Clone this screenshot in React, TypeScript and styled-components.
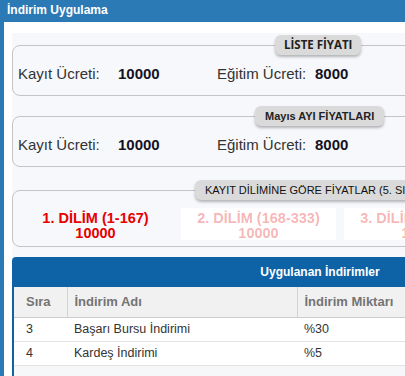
import React from "react";
import styled, { createGlobalStyle, css } from "styled-components";

const GlobalStyle = createGlobalStyle`
  html, body {
    margin: 0;
    padding: 0;
    overflow: hidden;
    background: #fff;
  }
  body {
    font-family: "Liberation Sans", Arial, sans-serif;
  }
  * {
    box-sizing: border-box;
  }
`;

const Frame = styled.div`
  width: 405px;
  height: 376px;
  border-left: 4px solid #2b7ab6;
  overflow: hidden;
  background: #fff;
`;

const TopBar = styled.div`
  height: 22px;
  background: #2b7ab6;
  color: #fff;
  font-size: 12px;
  font-weight: bold;
  line-height: 20px;
  padding-left: 3px;
  white-space: nowrap;
`;

const Body = styled.div`
  padding: 11px 0 0 8px;
`;

const Sheet = styled.div`
  width: 616px;
  background: #f6f8fb;
  padding: 2px 0 20px;
`;

const PriceBox = styled.fieldset<{ $gap: number; $bottom?: number }>`
  margin: ${(p) => p.$gap}px 0 0;
  padding: 0 0 ${(p) => p.$bottom ?? 12}px 5px;
  border: 1px solid #c4c4c4;
  border-radius: 8px;
  min-inline-size: 0;
`;

type LegendKind = "open" | "bold" | "plain";

const Legend = styled.legend<{ $offset: number; $kind: LegendKind }>`
  margin-left: ${(p) => p.$offset}px;
  height: 20px;
  line-height: 20px;
  padding: 0 10px;
  background: #dadada;
  border-radius: 6px;
  box-shadow: 0 2px 3px rgba(0, 0, 0, 0.28);
  color: #222;
  white-space: nowrap;
  ${(p) =>
    p.$kind === "open" &&
    css`
      font-family: "Open Sans", "Liberation Sans", sans-serif;
      font-weight: bold;
      font-size: 11.5px;
      padding: 0 9px;
    `}
  ${(p) =>
    p.$kind === "bold" &&
    css`
      font-weight: bold;
      font-size: 11px;
    `}
  ${(p) =>
    p.$kind === "plain" &&
    css`
      font-size: 11px;
      color: #111;
    `}
`;

const FeeRow = styled.div`
  display: grid;
  grid-template-columns: 100px 99px 98px auto;
  margin-top: 10px;
  line-height: 18px;
  font-size: 15px;
  white-space: nowrap;
`;

const FeeLabel = styled.span`
  color: #333;
`;

const FeeValue = styled.span`
  color: #15121f;
  font-weight: bold;
`;

const DilimRow = styled.div`
  display: flex;
  gap: 8px;
  margin-top: 8px;
`;

const DilimItem = styled.div<{ $active: boolean }>`
  flex: 0 0 155px;
  height: 32px;
  text-align: center;
  font-size: 14.5px;
  font-weight: bold;
  line-height: 15px;
  padding-top: 3px;
  white-space: nowrap;
  color: ${(p) => (p.$active ? "#e60000" : "rgba(230, 0, 0, 0.3)")};
  background: ${(p) => (p.$active ? "transparent" : "#fff")};
`;

const Panel = styled.div`
  margin-top: 10px;
  border: 2px solid #0e63a7;
  border-bottom: none;
  border-radius: 4px 4px 0 0;
  background: #f6f7f9;
  min-height: 130px;
`;

const PanelTitle = styled.div`
  height: 28px;
  background: #0e63a7;
  color: #fff;
  font-size: 12px;
  font-weight: bold;
  line-height: 26px;
  text-align: center;
`;

const Table = styled.table`
  width: 100%;
  border-collapse: collapse;
  table-layout: fixed;
`;

const Th = styled.th<{ $first?: boolean }>`
  height: 30px;
  background: #f1f1f1;
  color: #747474;
  font-size: 13px;
  font-weight: bold;
  text-align: left;
  padding: 0 0 0 ${(p) => (p.$first ? 12 : 7)}px;
  border-bottom: 1px solid #cdcdcd;
  border-left: ${(p) => (p.$first ? "none" : "1px solid #d2d2d2")};
  white-space: nowrap;
`;

const Td = styled.td<{ $first?: boolean }>`
  height: 24px;
  background: #fff;
  color: #333;
  font-size: 12.5px;
  padding: 0 0 0 ${(p) => (p.$first ? 12 : 7)}px;
  border-bottom: 1px solid #e3e3e3;
  white-space: nowrap;
`;

const dilimler = [
  { title: "1. DİLİM (1-167)", price: "10000", active: true },
  { title: "2. DİLİM (168-333)", price: "10000", active: false },
  { title: "3. DİLİM (334-500)", price: "10000", active: false },
];

const indirimler = [
  { sira: "3", ad: "Başarı Bursu İndirimi", miktar: "%30" },
  { sira: "4", ad: "Kardeş İndirimi", miktar: "%5" },
];

const App = () => {
  return (
    <Frame>
      <GlobalStyle />
      <TopBar>İndirim Uygulama</TopBar>
      <Body>
        <Sheet>
          <PriceBox $gap={0}>
            <Legend $offset={257} $kind="open">LİSTE FİYATI</Legend>
            <FeeRow>
              <FeeLabel>Kayıt Ücreti:</FeeLabel>
              <FeeValue>10000</FeeValue>
              <FeeLabel>Eğitim Ücreti:</FeeLabel>
              <FeeValue>8000</FeeValue>
            </FeeRow>
          </PriceBox>

          <PriceBox $gap={10}>
            <Legend $offset={237} $kind="bold">Mayıs AYI FİYATLARI</Legend>
            <FeeRow>
              <FeeLabel>Kayıt Ücreti:</FeeLabel>
              <FeeValue>10000</FeeValue>
              <FeeLabel>Eğitim Ücreti:</FeeLabel>
              <FeeValue>8000</FeeValue>
            </FeeRow>
          </PriceBox>

          <PriceBox $gap={13} $bottom={6}>
            <Legend $offset={177} $kind="plain">
              KAYIT DİLİMİNE GÖRE FİYATLAR (5. SINIF)
            </Legend>
            <DilimRow>
              {dilimler.map((d) => (
                <DilimItem key={d.title} $active={d.active}>
                  {d.title}
                  <br />
                  {d.price}
                </DilimItem>
              ))}
            </DilimRow>
          </PriceBox>

          <Panel>
            <PanelTitle>Uygulanan İndirimler</PanelTitle>
            <Table>
              <colgroup>
                <col style={{ width: 53 }} />
                <col style={{ width: 230 }} />
                <col />
              </colgroup>
              <thead>
                <tr>
                  <Th $first>Sıra</Th>
                  <Th>İndirim Adı</Th>
                  <Th>İndirim Miktarı</Th>
                </tr>
              </thead>
              <tbody>
                {indirimler.map((r) => (
                  <tr key={r.sira}>
                    <Td $first>{r.sira}</Td>
                    <Td>{r.ad}</Td>
                    <Td>{r.miktar}</Td>
                  </tr>
                ))}
              </tbody>
            </Table>
          </Panel>
        </Sheet>
      </Body>
    </Frame>
  );
};

export default App;
